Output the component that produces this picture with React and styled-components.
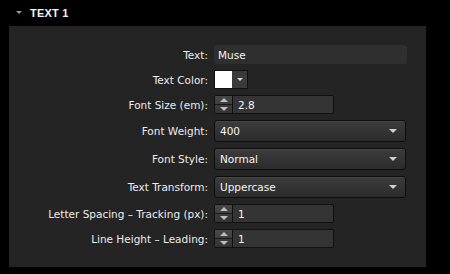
import React from 'react'
import styled, { createGlobalStyle } from 'styled-components'

const GlobalStyle = createGlobalStyle`
  html, body {
    margin: 0;
    padding: 0;
    background: #000;
  }
  body {
    font-family: "DejaVu Sans", "Liberation Sans", Arial, sans-serif;
    color: #e8e8e8;
  }
`

const Page = styled.div`
  width: 450px;
  height: 274px;
  background: #000;
  padding: 0 24px 7px 9px;
  box-sizing: border-box;
  display: flex;
  flex-direction: column;
`

const Header = styled.div`
  height: 26px;
  display: flex;
  align-items: center;
  gap: 8px;
  padding-left: 7px;
  font-family: "Liberation Sans", Arial, sans-serif;
  font-size: 11px;
  font-weight: bold;
  color: #f2f2f2;
  letter-spacing: 0.2px;
`

const Caret = styled.span`
  width: 0;
  height: 0;
  border-left: 3px solid transparent;
  border-right: 3px solid transparent;
  border-top: 3px solid #9a9a9a;
  margin-top: -1px;
`

const Panel = styled.div`
  flex: 1;
  background: #242424;
  padding-top: 19px;
  display: flex;
  flex-direction: column;
  gap: 6px;
`

const Row = styled.div`
  display: flex;
  align-items: center;
  height: ${p => p.h || 19}px;
`

const Label = styled.label`
  width: 199px;
  text-align: right;
  font-size: 10.5px;
  color: #ececec;
  margin-right: 6px;
  white-space: nowrap;
`

const TextInput = styled.div`
  width: 193px;
  height: 19px;
  box-sizing: border-box;
  background: #2f2f2f;
  border-radius: 3px;
  font-size: 10.5px;
  color: #f4f4f4;
  padding: 0 4px;
  display: flex;
  align-items: center;
`

const ColorPicker = styled.div`
  display: flex;
  height: 19px;
  width: 34px;
  background: #3a3a3a;
  border: 1px solid #111;
  box-sizing: border-box;
`

const Swatch = styled.div`
  width: 17px;
  background: #fff;
`

const DropArrow = styled.span`
  width: 0;
  height: 0;
  border-left: 3px solid transparent;
  border-right: 3px solid transparent;
  border-top: 3px solid #d8d8d8;
`

const ArrowCell = styled.div`
  flex: 1;
  display: flex;
  align-items: center;
  justify-content: center;
`

const Spinner = styled.div`
  display: flex;
  width: 120px;
  height: 19px;
  box-sizing: border-box;
  border: 1px solid #111;
  border-radius: 2px;
  background: #343434;
`

const Buttons = styled.div`
  width: 17px;
  display: flex;
  flex-direction: column;
  border-right: 1px solid #111;
  background: linear-gradient(#484848, #333);
`

const StepButton = styled.div`
  flex: 1;
  display: flex;
  align-items: center;
  justify-content: center;
  & + & {
    border-top: 1px solid #1a1a1a;
  }
`

const Tri = styled.span`
  width: 0;
  height: 0;
  border-left: 4px solid transparent;
  border-right: 4px solid transparent;
  ${p => p.up ? 'border-bottom: 4px solid #bdbdbd;' : 'border-top: 4px solid #bdbdbd;'}
`

const SpinValue = styled.div`
  flex: 1;
  display: flex;
  align-items: center;
  padding-left: 5px;
  font-size: 10.5px;
  color: #f4f4f4;
`

const Select = styled.div`
  width: 192px;
  height: 22px;
  box-sizing: border-box;
  border: 1px solid #0e0e0e;
  border-radius: 3px;
  background: linear-gradient(#3c3c3c, #2b2b2b);
  box-shadow: inset 0 1px 0 rgba(255,255,255,0.06);
  display: flex;
  align-items: center;
  justify-content: space-between;
  padding: 0 8px 0 5px;
  font-size: 10.5px;
  color: #f4f4f4;
`

const SelectArrow = styled.span`
  width: 0;
  height: 0;
  border-left: 4px solid transparent;
  border-right: 4px solid transparent;
  border-top: 4px solid #d0d0d0;
`

const NumberField = ({ value }) => (
  <Spinner>
    <Buttons>
      <StepButton><Tri up /></StepButton>
      <StepButton><Tri /></StepButton>
    </Buttons>
    <SpinValue>{value}</SpinValue>
  </Spinner>
)

const Dropdown = ({ value }) => (
  <Select>
    <span>{value}</span>
    <SelectArrow />
  </Select>
)

export default function App() {
  return (
    <Page>
      <GlobalStyle />
      <Header>
        <Caret />
        TEXT 1
      </Header>
      <Panel>
        <Row>
          <Label>Text:</Label>
          <TextInput>Muse</TextInput>
        </Row>
        <Row>
          <Label>Text Color:</Label>
          <ColorPicker>
            <Swatch />
            <ArrowCell><DropArrow /></ArrowCell>
          </ColorPicker>
        </Row>
        <Row>
          <Label>Font Size (em):</Label>
          <NumberField value="2.8" />
        </Row>
        <Row h={22}>
          <Label>Font Weight:</Label>
          <Dropdown value="400" />
        </Row>
        <Row h={22}>
          <Label>Font Style:</Label>
          <Dropdown value="Normal" />
        </Row>
        <Row h={22}>
          <Label>Text Transform:</Label>
          <Dropdown value="Uppercase" />
        </Row>
        <Row>
          <Label>Letter Spacing – Tracking (px):</Label>
          <NumberField value="1" />
        </Row>
        <Row>
          <Label>Line Height – Leading:</Label>
          <NumberField value="1" />
        </Row>
      </Panel>
    </Page>
  )
}
